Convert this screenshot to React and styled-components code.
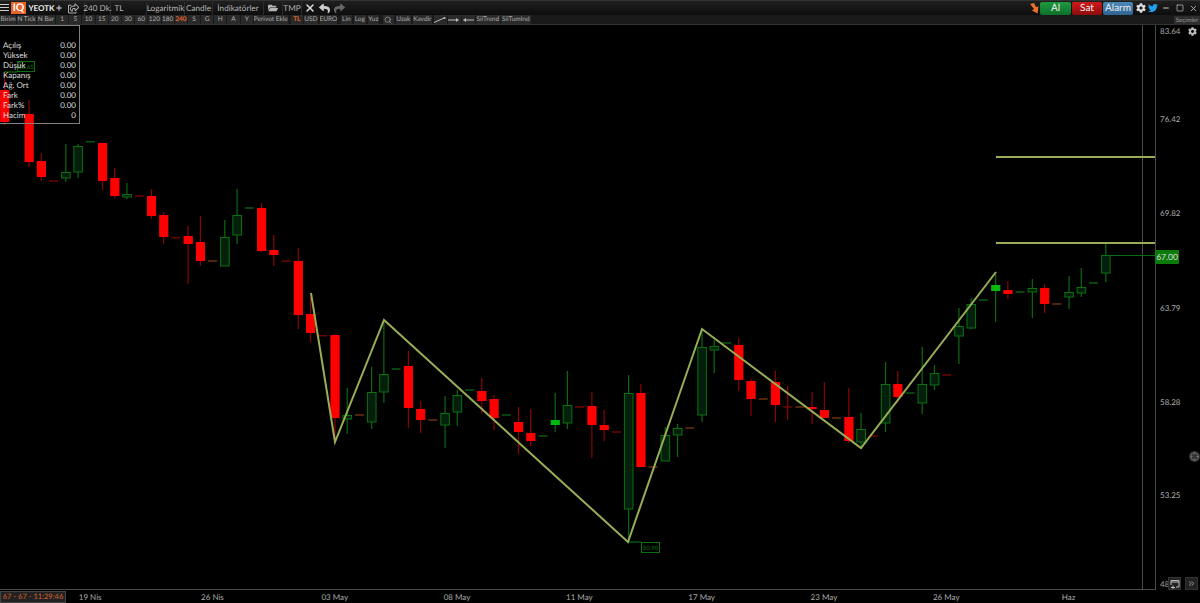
import React from "react";
import styled, { createGlobalStyle } from "styled-components";
import { FaCog, FaTwitter, FaFolderOpen, FaReply, FaShare, FaRegShareSquare } from "react-icons/fa";
import { Search, Plus, Minus, X, Square, ChevronsRight, Crosshair } from "lucide-react";

const Global = createGlobalStyle`
  html, body { margin: 0; padding: 0; background: #000; }
  * { box-sizing: border-box; }
`;
const FONT = `"Lato", "Open Sans", "Liberation Sans", sans-serif`;

const Page = styled.div`
  width: 1200px; height: 603px; overflow: hidden; background: #000; text-rendering: geometricPrecision;
  display: flex; flex-direction: column; font-family: ${FONT}; position: relative;
`;
const TopBar = styled.div`
  height: 15px; flex: none; display: flex; align-items: center;
  background: linear-gradient(#1f1f1f, #0d0d0d); border-top: 1px solid #333; color: #ccc;
`;
const TopItem = styled.div`
  width: ${p => p.$w}px; height: 13px; flex: none; display: flex; align-items: center; justify-content: center;
  font-size: ${p => p.$size || 8.2}px; font-weight: ${p => p.$bold ? 700 : 400}; color: ${p => p.$color || "#b5b5b5"};
  border-right: ${p => p.$sep ? "1px solid #2c2c2c" : "0"}; white-space: nowrap;
`;
const Logo = styled.div`
  width: 15px; height: 12px; margin: 0 2px 0 2px; background: #e8622a; color: #fff; font-size: 10.5px; font-weight: 700;
  flex: none; display: flex; align-items: center; justify-content: center; line-height: 1;
`;
const Burger = styled.div`
  width: 9px; height: 8px; flex: none;
  background: repeating-linear-gradient(#ccc 0 1px, transparent 1px 3px);
`;
const Spacer = styled.div`flex: 1;`;
const TradeButton = styled.div`
  width: ${p => p.$w}px; height: 13px; flex: none; margin-right: 1px; border-radius: 2px; display: flex; align-items: center; justify-content: center;
  background: ${p => p.$bg}; color: #eee; font-size: 10px;
`;
const SubBar = styled.div`
  height: 10px; flex: none; display: flex; align-items: stretch; background: #1a1a1a; position: relative;
  border-bottom: 1px solid #333;
`;
const Cell = styled.div`
  width: ${p => p.$w}px; margin-right: ${p => p.$gap ?? 1}px; flex: none; background: #2a2a2a; color: ${p => p.$color || "#aaa"};
  font-size: 6.5px; line-height: 9px; text-align: center; white-space: nowrap; overflow: hidden;
  font-weight: ${p => p.$color ? 700 : 400}; display: flex; align-items: center; justify-content: center;
`;
const Tooltip = styled.div`
  position: absolute; right: 0; top: 16px; width: 26px; height: 9px; background: #2e2e2e; color: #999; z-index: 2;
  font-size: 6px; line-height: 9px; text-align: center;
`;
const Main = styled.div`flex: 1; min-height: 0; display: flex; position: relative;`;
const ChartArea = styled.div`
  width: 1156px; flex: none; border-right: 1px solid #4a4a4a; border-bottom: 1px solid #4a4a4a; position: relative;
`;
const ChartSvg = styled.svg`display: block; width: 1155px; height: 564px;`;
const InfoPanel = styled.div`
  position: absolute; left: 0; top: 0; width: 80px; height: 99px; border: 1px solid #808080; border-left: 0;
  padding: 14px 3px 0 3px; color: #ddd; font-size: 8px;
`;
const InfoRow = styled.div`display: flex; justify-content: space-between; height: 10px; line-height: 10px;`;
const Axis = styled.div`
  width: 44px; flex: none; display: grid; padding-left: 4px; color: #aaa; font-size: 8px;
  grid-template-rows: 88px 94px 95px 94px 93px 89px 12px; line-height: 12px; position: relative;
`;
const PriceTag = styled.div`
  position: absolute; left: -1px; top: 225px; width: 24px; height: 14px; background: #0a7a0a; border-radius: 1px; color: #ddd;
  font-size: 8.5px; line-height: 14px; text-align: center;
`;
const AxisGear = styled.div`position: absolute; right: 3px; top: 2px; color: #bbb; display: flex;`;
const AxisKnob = styled.div`
  position: absolute; left: 33px; top: 426px; width: 11px; height: 11px; border-radius: 50%; background: #333; color: #777;
  display: flex; align-items: center; justify-content: center;
`;
const CornerButton = styled.div`
  position: absolute; top: ${p => p.$top}px; left: ${p => p.$left}px; width: 13px; height: 13px; background: #222; color: #bbb;
  border: 1px solid #333; display: flex; align-items: center; justify-content: center;
`;
const BottomBar = styled.div`height: 13px; flex: none; display: flex; align-items: center; color: #aaa; font-size: 8px;`;
const TimeBox = styled.div`
  width: 66px; height: 12px; flex: none; margin-right: -37px; background: #222; border: 1px solid #444; color: #d8602a;
  font-size: 7.5px; line-height: 10px; text-align: center; white-space: nowrap;
`;
const TimeLabel = styled.div`width: 122.3px; flex: none; text-align: center;`;

// [top, bottom, wickTop, wickBottom, kind]: r red, g green outline, b bright green; dr/dg/db flat bars have only y
const bars = [
  [90,122,72,125,"r"],null,
  [114,162,100,167,"r"],[161,177,153,181,"r"],[181,"dr"],[172,178,144,182,"g"],[146,172,144,178,"g"],[141.7,"dg"],
  [143,181,143,190,"r"],[178,196,168,198,"r"],[194,197,183,199,"g"],[196,"dr"],[196,216,189,219,"r"],[215,237,212,244,"r"],[237.7,"dr"],
  [236,244,226,284,"r"],[242,261,216,266,"r"],[261,"db"],[237,266,220,266,"g"],[215,235,189,244,"g"],[208,"dg"],
  [208,251,203,252,"r"],[250,255,235,266,"r"],[261,"dr"],[261,315,248,329,"r"],[314,333,297,342,"r"],[335.7,"dr"],
  [335,418,335,442,"r"],[415,419,388,434,"g"],[415,"db"],[392,422,367,429,"g"],[374,392,320,403,"g"],[369,"dg"],
  [366,408,351,428,"r"],[409,420,401,433,"r"],[420,"db"],[413,425,396,448,"g"],[395,412,390,426,"g"],[390,"dg"],
  [391,401,378,413,"r"],[399,418,395,430,"r"],[415,"dg"],[422,432,407,454,"r"],[433,441,409,446,"r"],[436,"dg"],
  [420,425,393,432,"b"],[405,423,371,429,"g"],[407,"dr"],[406,425,392,458,"r"],[425,430,410,441,"r"],[432,"dr"],
  [393,509,375,542,"g"],[393,467,384,467,"r"],[467,"db"],[435,461,427,461,"g"],[428,435,424,457,"g"],[428,"db"],
  [347,415,329,422,"g"],[346,350,340,373,"g"],[343,"dg"],[345,380,338,391,"r"],[381,399,379,416,"r"],[399,"db"],
  [382,405,371,422,"r"],[407,407,386,420,"x"],[407,"db"],[407,409,392,424,"r"],[410,418,382,418,"r"],[418,"db"],
  [417,441,388,443,"r"],[429,442,413,448,"g"],[436,"dr"],[384,423,362,432,"g"],[384,397,371,403,"r"],[393,"dg"],
  [384,403,347,414,"g"],[373,385,365,390,"g"],[375,"dr"],[326,336,308,364,"g"],[304,328,298,329,"g"],[300,"dg"],
  [285,291,272,322,"b"],[290,294,281,299,"r"],[292,"dg"],[288,292,279,318,"g"],[288,304,284,313,"r"],[304,"db"],
  [292,297,276,309,"g"],[287,293,268,297,"g"],[283,"dg"],[255,273,243,282,"g"],
];
const DASH = { dr: "#6e0505", dg: "#0b5a12", db: "#6a3312" };
const Bar = ({ d, x }) => {
  if (!d) return null;
  if (d.length === 2) return <rect x={x - 4.5} y={d[0] - 0.75} width={9} height={1.5} fill={DASH[d[1]]} />;
  const [t, b, wt, wb, k] = d;
  const wick = k === "g" || k === "b" ? "#0a6a10" : "#8a0404";
  return (
    <g>
      <rect x={x - 0.6} y={wt} width={1.2} height={wb - wt} fill={wick} />
      {k === "r" && <rect x={x - 4.5} y={t} width={9.2} height={b - t} fill="#ff0000" />}
      {k === "g" && <rect x={x - 4.2} y={t + 0.5} width={8.6} height={b - t - 0.5} fill="#04200c" stroke="#0a7012" strokeWidth="1" />}
      {k === "b" && <rect x={x - 4.5} y={t} width={9.2} height={b - t} fill="#06b80e" />}
      {k === "x" && <rect x={x - 4.5} y={t - 0.75} width={9} height={1.5} fill="#6e0505" />}
    </g>
  );
};

const periods = [["1"],["5"],["10"],["15"],["20"],["30"],["60"],["120"],["180"],["240","#e8622a"],["S"],["G"],["H"],["A"],["Y"]];
const info = [["Açılış","0.00"],["Yüksek","0.00"],["Düşük","0.00"],["Kapanış","0.00"],["Ağ. Ort","0.00"],["Fark","0.00"],["Fark%","0.00"],["Hacim","0"]];
const ticks = ["83.64","76.42","69.82","63.79","58.28","53.25","48"];
const times = ["19 Nis","26 Nis","03 May","08 May","11 May","17 May","23 May","26 May","Haz"];
const LINE = "#98ad55";

export default function App() {
  return (
    <Page>
      <Global />
      <TopBar>
        <Burger />
        <Logo>IQ</Logo>
        <TopItem $w={27} $bold $color="#eee" $size={8}>YEOTK</TopItem>
        <TopItem $w={8} $color="#ddd"><Plus size={8} strokeWidth={3} /></TopItem>
        <TopItem $w={22} $sep><FaRegShareSquare size={11} /></TopItem>
        <TopItem $w={26} $sep>240 Dk.</TopItem>
        <TopItem $w={16}>TL</TopItem>
        <TopItem $w={20} $sep />
        <TopItem $w={38} $sep>Logaritmik</TopItem>
        <TopItem $w={28} $sep>Candle</TopItem>
        <TopItem $w={51} $sep>İndikatörler</TopItem>
        <TopItem $w={19} $sep><FaFolderOpen size={10} /></TopItem>
        <TopItem $w={19} $sep>TMP</TopItem>
        <TopItem $w={15}><X size={12} strokeWidth={3} color="#ddd" /></TopItem>
        <TopItem $w={14}><FaReply size={11} color="#ccc" /></TopItem>
        <TopItem $w={16}><FaShare size={11} color="#666" /></TopItem>
        <Spacer />
        <TopItem $w={11}>
          <svg width="9" height="11" viewBox="0 0 9 11"><path d="M0 1 L4 0 L6 4 L8.5 3.5 L7.5 10.5 L2 7.5 L4 6 Z" fill="#e8722a" /></svg>
        </TopItem>
        <TradeButton $w={31} $bg="linear-gradient(#1f9a40,#0c7028)">Al</TradeButton>
        <TradeButton $w={30} $bg="linear-gradient(#d01a1a,#8c0c0c)">Sat</TradeButton>
        <TradeButton $w={30} $bg="linear-gradient(#4a88b8,#2e6490)">Alarm</TradeButton>
        <TopItem $w={13} $color="#ddd"><FaCog size={10} /></TopItem>
        <TopItem $w={12} $color="#1da1f2"><FaTwitter size={10} /></TopItem>
        <TopItem $w={14} $color="#ccc"><Minus size={8} strokeWidth={3} /></TopItem>
        <TopItem $w={14} $color="#ccc"><Square size={8} strokeWidth={2} /></TopItem>
        <TopItem $w={13} $color="#ccc"><X size={9} strokeWidth={2} /></TopItem>
      </TopBar>
      <SubBar>
        <Cell $w={16}>Birim</Cell>
        <Cell $w={19}>N Tick</Cell>
        <Cell $w={18}>N Bar</Cell>
        {periods.map(([t, c]) => <Cell key={t} $w={12.2} $color={c}>{t}</Cell>)}
        <Cell $w={34} $gap={3}>Perivot Ekle</Cell>
        <Cell $w={12} $color="#e8622a">TL</Cell>
        <Cell $w={14} $gap={2}>USD</Cell>
        <Cell $w={17} $gap={4}>EURO</Cell>
        <Cell $w={11} $gap={2}>Lin</Cell>
        <Cell $w={12} $gap={2}>Log</Cell>
        <Cell $w={11} $gap={4}>Yuz</Cell>
        <Cell $w={11} $gap={2}><Search size={8} /></Cell>
        <Cell $w={15} $gap={2}>Uzak</Cell>
        <Cell $w={19} $gap={2}>Kavdir</Cell>
        <Cell $w={13}>
          <svg width="12" height="6" viewBox="0 0 12 6"><path d="M0 5.5 L10 1" stroke="#bbb" /><circle cx="10.5" cy="1" r="1" fill="#bbb" /></svg>
        </Cell>
        <Cell $w={13}>
          <svg width="12" height="6" viewBox="0 0 12 6"><path d="M0 3 H9" stroke="#bbb" /><path d="M8 1 L11 3 L8 5 Z" fill="#bbb" /></svg>
        </Cell>
        <Cell $w={13}>
          <svg width="12" height="6" viewBox="0 0 12 6"><path d="M3 3 H12" stroke="#bbb" /><path d="M4 1 L1 3 L4 5 Z" fill="#bbb" /></svg>
        </Cell>
        <Cell $w={24}>SilTrend</Cell>
        <Cell $w={30}>SilTumInd</Cell>
      </SubBar>
      <Tooltip>Seçimler</Tooltip>
      <Main>
        <ChartArea>
          <ChartSvg viewBox="0 25 1155 564">
            <line x1="1142.5" x2="1142.5" y1="25" y2="589" stroke="#4a4a4a" />
            <rect x="1106" y="255" width="49" height="1" fill="#0b6a12" />
            {bars.map((d, i) => <Bar key={i} d={d} x={4.6 + i * 12.235} />)}
            <path d="M4 72 H17" stroke="#0a7012" strokeWidth="1.2" />
            <rect x="17.5" y="61.5" width="17" height="10" fill="#000" stroke="#0a7012" />
            <text x="26" y="69" fontSize="6" fill="#0a7012" textAnchor="middle">83.65</text>
            <path d="M628 542 H641" stroke="#0a7012" strokeWidth="1.2" />
            <rect x="641.5" y="542.5" width="18" height="10" fill="#000" stroke="#0a7012" />
            <text x="650.5" y="550" fontSize="6" fill="#0a7012" textAnchor="middle">50.90</text>
            <polyline points="311,293 335,442 384,320 628,542 702,329 861,448 996,272" fill="none" stroke={LINE} strokeWidth="2" />
            <line x1="996" x2="1155" y1="157" y2="157" stroke={LINE} strokeWidth="2" />
            <line x1="996" x2="1155" y1="243" y2="243" stroke={LINE} strokeWidth="2" />
          </ChartSvg>
          <InfoPanel>
            {info.map(([l, v]) => <InfoRow key={l}><span>{l}</span><span>{v}</span></InfoRow>)}
          </InfoPanel>
        </ChartArea>
        <Axis>
          {ticks.map(t => <div key={t}>{t}</div>)}
          <PriceTag>67.00</PriceTag>
          <AxisGear><FaCog size={9} /></AxisGear>
          <AxisKnob><Crosshair size={9} /></AxisKnob>
          <CornerButton $top={552} $left={12}>
            <svg width="10" height="10" viewBox="0 0 10 10" fill="none" stroke="#bbb"><path d="M1 1.5 H9 V8 H6 M1 1.5 V6" /><path d="M1 3 H9" /><path d="M1 8.5 H5 M3 6.5 V10" /></svg>
          </CornerButton>
          <CornerButton $top={552} $left={29}><ChevronsRight size={9} /></CornerButton>
        </Axis>
      </Main>
      <BottomBar>
        <TimeBox>67 - 67 - 11:29:46</TimeBox>
        {times.map(t => <TimeLabel key={t}>{t}</TimeLabel>)}
      </BottomBar>
    </Page>
  );
}
